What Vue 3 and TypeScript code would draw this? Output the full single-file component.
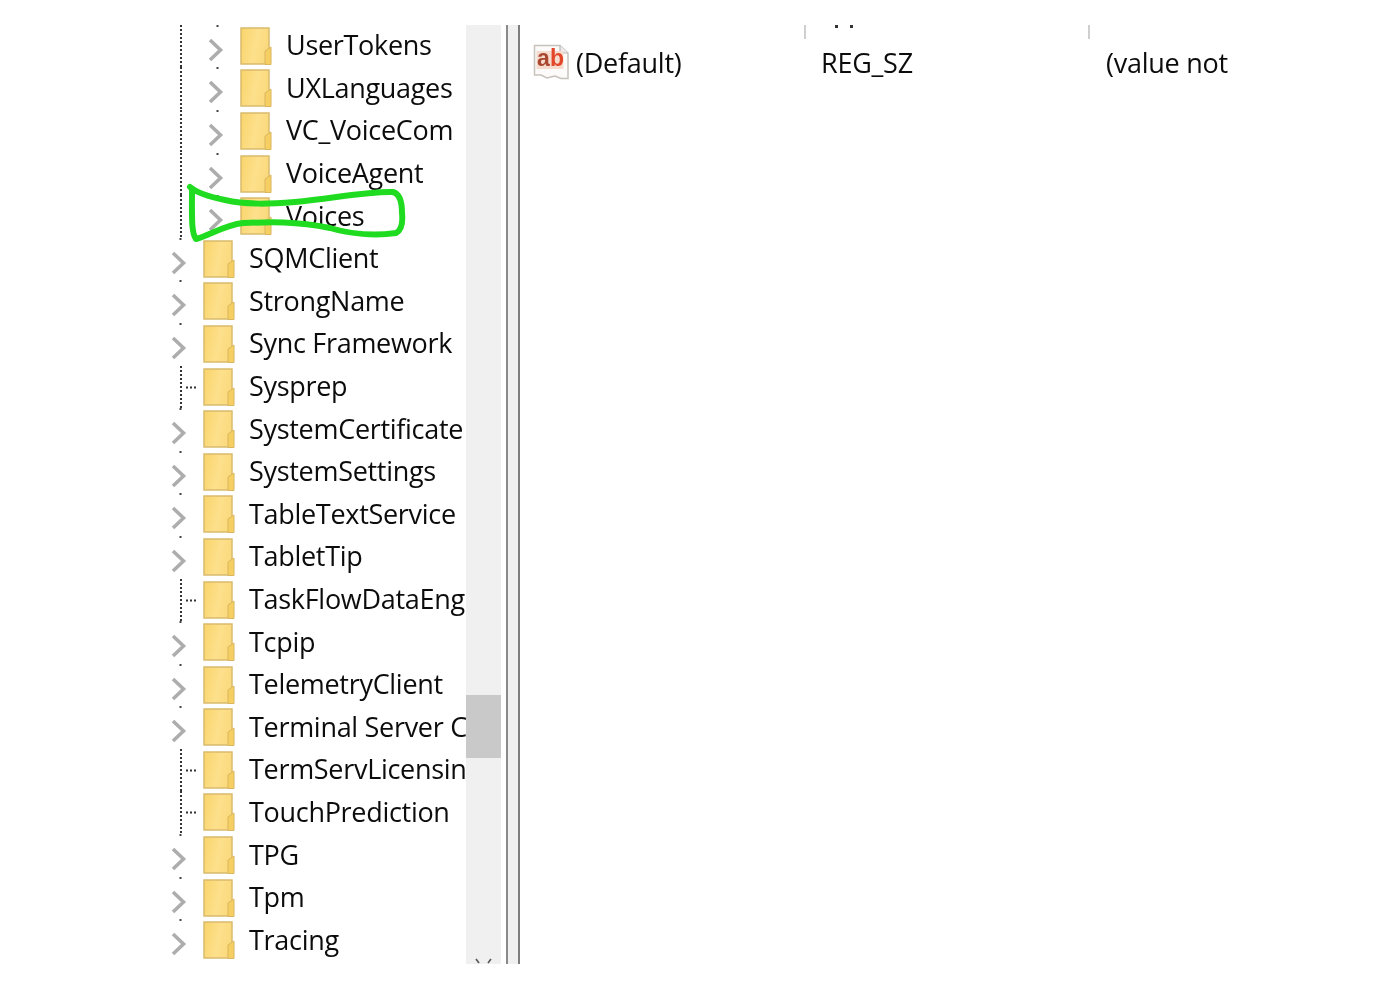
<script setup lang="ts">
interface Row { name: string; nested?: boolean; leaf?: boolean }
const rows: Row[] = [
  { name: 'UserTokens', nested: true },
  { name: 'UXLanguages', nested: true },
  { name: 'VC_VoiceCom', nested: true },
  { name: 'VoiceAgent', nested: true },
  { name: 'Voices', nested: true },
  { name: 'SQMClient' },
  { name: 'StrongName' },
  { name: 'Sync Framework' },
  { name: 'Sysprep', leaf: true },
  { name: 'SystemCertificate' },
  { name: 'SystemSettings' },
  { name: 'TableTextService' },
  { name: 'TabletTip' },
  { name: 'TaskFlowDataEng', leaf: true },
  { name: 'Tcpip' },
  { name: 'TelemetryClient' },
  { name: 'Terminal Server C' },
  { name: 'TermServLicensin', leaf: true },
  { name: 'TouchPrediction', leaf: true },
  { name: 'TPG' },
  { name: 'Tpm' },
  { name: 'Tracing' },
]
</script>

<template>
  <div class="page">
    <div class="window">
      <div class="tree">
        <svg class="defs" width="0" height="0">
          <defs>
            <linearGradient id="folderFill" x1="0" x2="1" y1="0" y2="0.25">
              <stop offset="0" stop-color="#f9d46a" />
              <stop offset="0.6" stop-color="#fde08c" />
              <stop offset="1" stop-color="#fbda7e" />
            </linearGradient>
          </defs>
        </svg>
        <div v-for="r in rows" :key="r.name" class="row">
          <div v-if="r.nested" class="guide">
            <svg width="37" height="42" viewBox="0 0 37 42"><line x1="11" y1="0" x2="11" y2="42" class="dots" /></svg>
          </div>
          <div class="expander">
            <svg v-if="!r.leaf" width="33" height="43" viewBox="0 0 33 43">
              <rect x="9.500" y="0" width="2" height="2" fill="#444" />
              <path d="M3 15 L13.500 25 L3 35" class="chev" />
            </svg>
            <svg v-else width="33" height="43" viewBox="0 0 33 43">
              <line x1="11" y1="0" x2="11" y2="43" class="dots" />
              <line x1="16" y1="21.500" x2="27" y2="21.500" class="dots" />
            </svg>
          </div>
          <svg class="folder" width="33" height="39" viewBox="0 0 33 39">
            <rect x="1" y="1" width="28" height="36" fill="url(#folderFill)" stroke="#d9bb6c" stroke-width="1.500" />
            <path d="M25 37.500 L25 24 L31 20 L31 37.500 Z" fill="#f6cf62" stroke="#dab65e" stroke-width="1" />
          </svg>
          <span class="label">{{ r.name }}</span>
        </div>
      </div>
      <div class="scrollbar">
        <div class="thumb"></div>
        <svg class="arrow" width="35" height="6" viewBox="0 0 35 6">
          <path d="M10 1 L13 5 M25 1 L22 5" stroke="#555" stroke-width="1.600" fill="none" />
        </svg>
      </div>
      <div class="splitter"></div>
      <div class="values">
        <div class="header">
          <span class="tick tick-a"></span>
          <span class="tick-dots"><i></i><i></i></span>
          <span class="tick tick-b"></span>
        </div>
        <div class="value-row">
          <div class="name-cell">
            <svg class="ab" width="37" height="36" viewBox="0 0 37 36">
              <path d="M1.500 1.500 H27 L35 9 V34.500 H28 L22 32 L14 34 L8 31 L1.500 31 Z" fill="#fdfbfa" stroke="#c8c2bd" stroke-width="1.500" />
              <path d="M27 1.500 V9 H35" fill="#ececec" stroke="#b9b6b2" stroke-width="1.200" />
              <rect x="3.500" y="7" width="27" height="18" fill="#f6dccf" />
              <text x="4" y="22" class="ab-text">a</text>
              <text x="17" y="22" class="ab-text b">b</text>
            </svg>
            <span>(Default)</span>
          </div>
          <span class="type-cell">REG_SZ</span>
          <span class="data-cell">(value not</span>
        </div>
      </div>
    </div>
    <svg class="marker" width="240" height="70" viewBox="0 0 240 70">
      <path d="M5 4 C 12 10 25 14 40 17 C 62 22 85 21 110 19 C 150 15 185 8 208 9 C 215 11 217 20 217 30 C 218 40 217 47 211 50 C 190 53 165 51 145 45 C 110 38 85 39 58 40 C 40 42 25 52 11 56 C 6 50 7 30 7 8" fill="none" stroke="#20dc20" stroke-width="6" stroke-linecap="round" stroke-linejoin="round" />
    </svg>
  </div>
</template>

<style scoped>
.page {
  position: relative;
  width: 1400px;
  height: 989px;
  background: #fff;
  padding-top: 25px;
  box-sizing: border-box;
  overflow: hidden;
  font-family: "Open Sans", "Noto Sans", sans-serif;
  color: #0c0c0c;
}
.window {
  display: flex;
  height: 939px;
  margin-left: 170px;
  overflow: hidden;
}
.tree {
  width: 296px;
  flex: none;
  overflow: hidden;
}
.defs {
  display: block;
}
.row {
  display: flex;
  align-items: center;
  height: 42.6px;
  white-space: nowrap;
}
.guide {
  width: 37px;
  flex: none;
  height: 43px;
}
.guide svg,
.expander svg {
  display: block;
}
.expander {
  width: 33px;
  flex: none;
  height: 43px;
}
.dots {
  stroke: #333;
  stroke-width: 2;
  stroke-dasharray: 2 2;
}
.chev {
  fill: none;
  stroke: #adadad;
  stroke-width: 3.6;
  filter: blur(0.5px);
}
.folder {
  flex: none;
  margin-right: 13px;
  filter: blur(0.4px);
}
.label {
  font-size: 27px;
  line-height: 42px;
  padding-bottom: 2px;
  letter-spacing: -0.3px;
  filter: blur(0.35px);
}
.scrollbar {
  width: 35px;
  flex: none;
  background: #f0f0f0;
  display: flex;
  flex-direction: column;
}
.thumb {
  height: 63px;
  margin-top: 670px;
  background: #c9c9c9;
}
.arrow {
  margin-top: auto;
}
.splitter {
  width: 14px;
  flex: none;
  box-sizing: border-box;
  margin-left: 5px;
  background: #f0f0f0;
  border-left: 2px solid #8a8a8a;
  border-right: 2px solid #7d7d7d;
}
.values {
  flex: 1;
  font-size: 27px;
  letter-spacing: -0.25px;
}
.header {
  position: relative;
  display: flex;
  height: 15px;
}
.tick {
  width: 2px;
  height: 14px;
  background: #cfcfcf;
}
.tick-a {
  margin-left: 284px;
}
.tick-dots {
  display: flex;
  gap: 12px;
  margin-left: 29px;
}
.tick-dots i {
  width: 3px;
  height: 3px;
  background: #333;
}
.tick-b {
  margin-left: 235px;
}
.value-row {
  display: flex;
  align-items: center;
  height: 44px;
  filter: blur(0.35px);
}
.name-cell {
  width: 301px;
  flex: none;
  padding-left: 13px;
  box-sizing: border-box;
  display: flex;
  align-items: center;
  gap: 6px;
}
.ab {
  flex: none;
}
.ab-text {
  font-family: "Liberation Sans", sans-serif;
  font-size: 23px;
  font-weight: 700;
  fill: #a9482f;
}
.ab-text.b {
  fill: #e2472a;
}
.type-cell {
  width: 285px;
  flex: none;
}
.marker {
  position: absolute;
  left: 185px;
  top: 183px;
}
</style>
